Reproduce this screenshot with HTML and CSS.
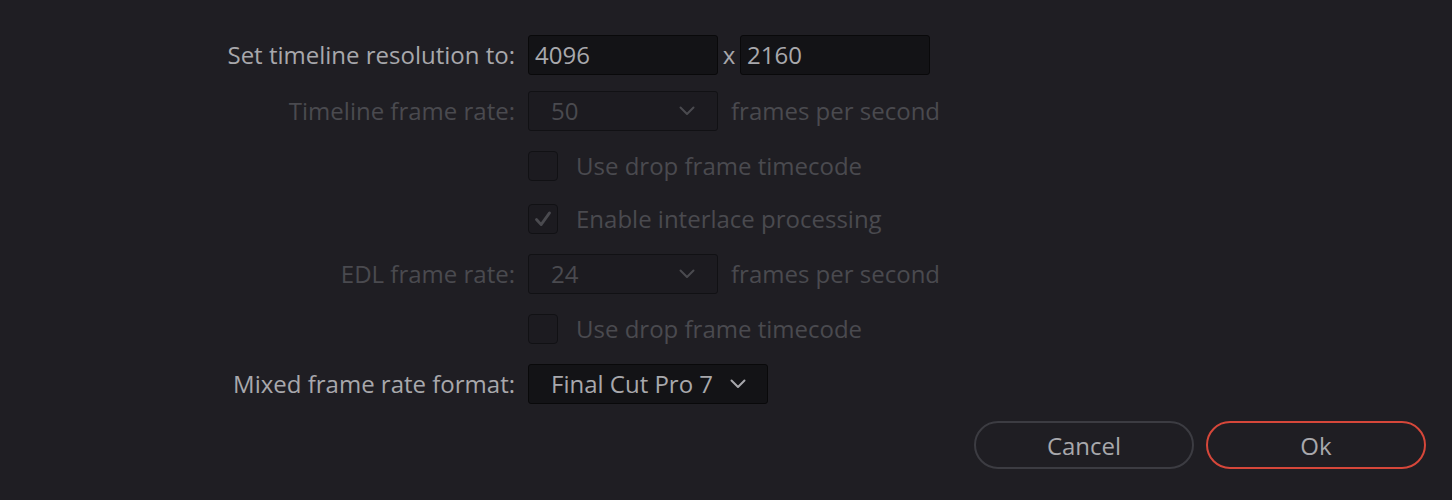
FILE: index.html
```html
<!DOCTYPE html>
<html>
<head>
<meta charset="utf-8">
<link rel="stylesheet" href="styles.css">
</head>
<body>
<div class="dialog">
  <div class="form">
    <div class="label">Set timeline resolution to:</div>
    <div class="ctrl">
      <div class="field">4096</div>
      <span class="times">x</span>
      <div class="field">2160</div>
    </div>

    <div class="label disabled">Timeline frame rate:</div>
    <div class="ctrl">
      <div class="select off"><span>50</span><svg class="chev" viewBox="0 0 16 10"><path d="M1.5 1.5 L8 8 L14.5 1.5"/></svg></div>
      <span class="unit">frames per second</span>
    </div>

    <div class="label"></div>
    <div class="ctrl">
      <span class="check"></span><span class="check-text">Use drop frame timecode</span>
    </div>

    <div class="label"></div>
    <div class="ctrl">
      <span class="check"><svg viewBox="0 0 30 30"><path d="M8 15.5 L13 21 L22 8.5"/></svg></span><span class="check-text">Enable interlace processing</span>
    </div>

    <div class="label disabled">EDL frame rate:</div>
    <div class="ctrl">
      <div class="select off"><span>24</span><svg class="chev" viewBox="0 0 16 10"><path d="M1.5 1.5 L8 8 L14.5 1.5"/></svg></div>
      <span class="unit">frames per second</span>
    </div>

    <div class="label"></div>
    <div class="ctrl">
      <span class="check"></span><span class="check-text">Use drop frame timecode</span>
    </div>

    <div class="label">Mixed frame rate format:</div>
    <div class="ctrl">
      <div class="select on"><span>Final Cut Pro 7</span><svg class="chev" viewBox="0 0 16 10"><path d="M1.5 1.5 L8 8 L14.5 1.5"/></svg></div>
    </div>
  </div>
  <div class="buttons">
    <button class="btn cancel">Cancel</button>
    <button class="btn ok">Ok</button>
  </div>
</div>
</body>
</html>
```

FILE: styles.css
```css
html, body {
  margin: 0;
  padding: 0;
  background: #1f1e23;
}
body {
  width: 1452px;
  height: 500px;
  overflow: hidden;
  font-family: "Open Sans", "Liberation Sans", sans-serif;
  font-size: 24px;
  line-height: 32px;
  color: #a8a8ac;
}
.dialog {
  display: flex;
  flex-direction: column;
}
.form {
  display: grid;
  grid-template-columns: 515px auto;
  grid-template-rows: 57px 56px 53px 54px 55px 55px 55px;
  column-gap: 13px;
  padding-top: 26px;
}
.label {
  justify-self: end;
  align-self: center;
  white-space: nowrap;
}
.label.disabled { color: #4a4a4f; }
.ctrl {
  display: flex;
  align-items: center;
}
.field {
  box-sizing: border-box;
  width: 190px;
  height: 40px;
  background: #131316;
  border: 1.5px solid #09090a;
  border-radius: 3px;
  padding-left: 6px;
  display: flex;
  align-items: center;
  color: #a8a8ac;
}
.times {
  width: 22px;
  text-align: center;
  color: #a8a8ac;
}
.select {
  box-sizing: border-box;
  height: 40px;
  border-radius: 3px;
  display: flex;
  align-items: center;
  padding-left: 22px;
}
.select.off {
  width: 190px;
  background: #1c1b20;
  border: 1.5px solid #111114;
  color: #4a4a4f;
  justify-content: space-between;
  padding-right: 22px;
}
.select.on {
  width: 240px;
  background: #131316;
  border: 1.5px solid #09090a;
  color: #a8a8ac;
  gap: 17px;
}
.chev {
  width: 16px;
  height: 10px;
  fill: none;
  stroke-width: 2;
  stroke-linecap: round;
  stroke-linejoin: round;
}
.select.off .chev { stroke: #4a4a4f; }
.select.on .chev { stroke: #a8a8ac; }
.unit {
  margin-left: 13px;
  color: #4a4a4f;
}
.check {
  box-sizing: border-box;
  width: 30px;
  height: 30px;
  border: 1.5px solid #111114;
  border-radius: 4px;
  background: #1c1b20;
  display: flex;
  align-items: center;
  justify-content: center;
}
.check svg {
  width: 30px;
  height: 30px;
  fill: none;
  stroke: #4a4a4f;
  stroke-width: 3;
  stroke-linecap: round;
  stroke-linejoin: round;
}
.check-text {
  margin-left: 18px;
  color: #4a4a4f;
}
.buttons {
  display: flex;
  justify-content: flex-end;
  gap: 12px;
  padding-right: 26px;
  margin-top: 10px;
}
.btn {
  box-sizing: border-box;
  width: 220px;
  height: 48px;
  border-radius: 24px;
  background: transparent;
  font-family: "Open Sans", "Liberation Sans", sans-serif;
  font-size: 24px;
  color: #a8a8ac;
  padding: 0;
}
.btn.cancel { border: 2px solid #3c3c42; }
.btn.ok { border: 2px solid #d6473a; }
```
